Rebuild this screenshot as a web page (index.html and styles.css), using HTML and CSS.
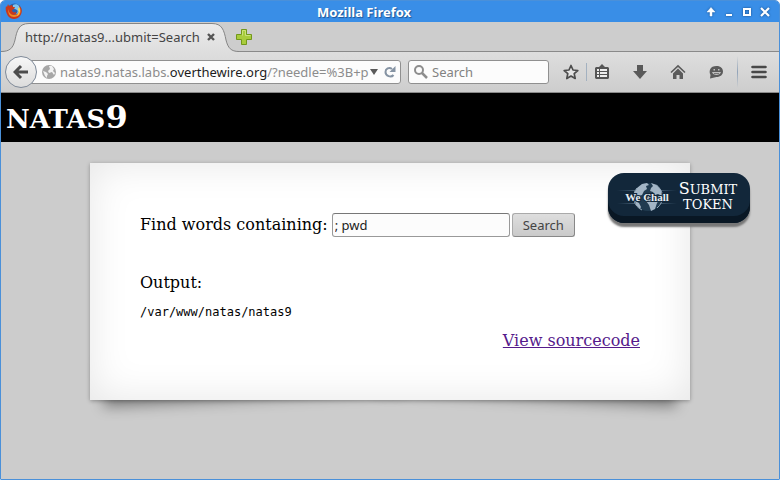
FILE: index.html
```html
<!DOCTYPE html>
<html lang="en">
<head>
<meta charset="utf-8">
<title>Mozilla Firefox</title>
<link rel="stylesheet" href="styles.css">
</head>
<body>
<div class="window">
  <header class="titlebar">
    <svg class="logo" width="18" height="18" viewBox="0 0 18 18" aria-hidden="true">
      <circle cx="9.500" cy="8.500" r="7" fill="#2a62ac"/>
      <path d="M8 3c3-2 7 0 7 4s-2 5-4 5c2-2 2-3 1-4s-3-1-4-2z" fill="#7fc4ef"/>
      <path d="M1 4l1 1 1-3 1 2 3-1 1 2 2 0-1 2-2 1c0 2 2 3 4 2 1 2-1 3-3 3 4 1 6-2 6-5 1 0 1-3 0-5 3 3 4 7 1 11-3 4-9 4-12 0C1 11 0 7 1 4z" fill="#c93a1c"/>
      <path d="M3 7c1 4 3 6 6 6 4 0 6-3 6-7 2 5-1 9-6 9-4 0-6-3-6-8z" fill="#f08a24"/>
      <path d="M14 5c2 3 1 7-2 9 2-3 2-5 1-7z" fill="#ffd84a"/>
    </svg>
    <h2 class="caption">Mozilla Firefox</h2>
    <div class="controls">
      <button aria-label="Roll up"><svg width="12" height="12" viewBox="0 0 12 12"><path d="M6 1.500L2 6h3v4h2V6h3z" fill="#fff" stroke="#fff" stroke-width=".5"/></svg></button>
      <button aria-label="Minimize"><svg width="12" height="12" viewBox="0 0 12 12"><path d="M3 8h6v2H3z" fill="#fff"/></svg></button>
      <button aria-label="Maximize"><svg width="12" height="12" viewBox="0 0 12 12"><path d="M2 2h8v8H2zM4 4v4h4V4z" fill="#fff" fill-rule="evenodd"/></svg></button>
      <button aria-label="Close"><svg width="12" height="12" viewBox="0 0 12 12"><path d="M2 2l8 8M10 2l-8 8" stroke="#fff" stroke-width="2.200"/></svg></button>
    </div>
  </header>

  <div class="tabs">
    <div class="tab">
      <svg class="tab-shape" width="238" height="30" viewBox="0 0 238 30" aria-hidden="true">
        <defs><linearGradient id="tabfill" x1="0" y1="0" x2="0" y2="1"><stop offset="0" stop-color="#ebebeb"/><stop offset="1" stop-color="#dedede"/></linearGradient></defs>
        <path d="M0 29.500C9 29.500 12 26 14 18C16 8 18 1.500 28 1.500H211C221 1.500 223 8 225 18C227 26 230 29.500 238 29.500V30H0z" fill="url(#tabfill)"/>
        <path d="M0 29.500C9 29.500 12 26 14 18C16 8 18 1.500 28 1.500H211C221 1.500 223 8 225 18C227 26 230 29.500 238 29.500" fill="none" stroke="#858585"/>
      </svg>
      <span class="tab-title">http://natas9...ubmit=Search</span>
      <button class="tab-close" aria-label="Close tab"><svg width="10" height="10" viewBox="0 0 10 10"><path d="M2 2l6 6M8 2l-6 6" stroke="#555" stroke-width="2.400"/></svg></button>
    </div>
    <button class="new-tab" aria-label="New tab"><svg width="16" height="16" viewBox="0 0 16 16"><path d="M5.500.5h5v5h5v5h-5v5h-5v-5h-5v-5h5z" fill="#a9cc3c" stroke="#72981b"/><path d="M6.500 6.500v-5h3v5h5" fill="none" stroke="#cbe27b"/></svg></button>
  </div>

  <nav class="toolbar">
    <button class="back" aria-label="Back"><svg width="16" height="16" viewBox="0 0 16 16"><path d="M8 2L2 8l6 6M3 8h12" fill="none" stroke="#4c4c4c" stroke-width="3"/></svg></button>
    <div class="urlbar">
      <svg width="14" height="14" viewBox="0 0 14 14" aria-hidden="true"><circle cx="7" cy="7" r="7" fill="#a7a7a7"/><path d="M7 1l3 0 2 3-1 2 2 2-1 2-2-3-3 1-1-2 2-2zM1 6l3 1 2 2-1 2 0 2-2-2z" fill="#f3f3f3"/></svg>
      <div class="url" role="textbox" aria-label="Address" contenteditable="true" spellcheck="false">natas9.natas.labs.<span>overthewire.org</span>/?needle=%3B+p</div>
      <button aria-label="History"><svg width="8" height="6" viewBox="0 0 8 6"><path d="M0 0h8L4 6z" fill="#5a5a5a"/></svg></button>
      <button class="reload" aria-label="Reload"><svg width="12" height="12" viewBox="0 0 12 12"><path d="M8 3C5 .5 1.500 3 1.500 6c0 4 5.500 6 8 3" fill="none" stroke="#8593a3" stroke-width="2"/><path d="M11.500 0v6H5.500z" fill="#8593a3"/></svg></button>
    </div>
    <label class="searchbar">
      <svg width="14" height="14" viewBox="0 0 14 14" aria-hidden="true"><circle cx="5" cy="5" r="4" fill="none" stroke="#8d8d8d" stroke-width="2"/><path d="M8 8l5 5" stroke="#8d8d8d" stroke-width="2.500"/></svg>
      <input type="text" placeholder="Search" aria-label="Web search">
    </label>
    <div class="tools">
      <button aria-label="Bookmark"><svg width="16" height="16" viewBox="0 0 16 16"><path d="M8 1.500l2 4.500 4.800.5-3.600 3.200 1 4.800L8 12l-4.200 2.500 1-4.800L1.200 6.500 6 6z" fill="#e3e3e3" stroke="#4d4d4d" stroke-width="1.700" stroke-linejoin="round"/></svg></button>
      <i class="rule short"></i>
      <button aria-label="Bookmarks list"><svg width="16" height="16" viewBox="0 0 16 16"><path d="M2 3h3l3-3 3 3h3l1 1v10l-1 1H2l-1-1V4z" fill="#555"/><path d="M3 5h2v2H3zM6 5h7v2H6zM3 8h2v2H3zM6 8h7v2H6zM3 11h2v2H3zM6 11h7v2H6z" fill="#eee"/></svg></button>
      <button aria-label="Downloads"><svg width="16" height="16" viewBox="0 0 16 16"><path d="M5 1h6v6h4l-7 8-7-8h4z" fill="#595959"/></svg></button>
      <button aria-label="Home"><svg width="16" height="16" viewBox="0 0 16 16"><path d="M1 8.500L8 1.800l7 6.700" fill="none" stroke="#5b5b5b" stroke-width="1.600"/><path d="M3 9.500l5-5 5 5V15H9.500v-4h-3v4H3z" fill="#5b5b5b"/></svg></button>
      <button aria-label="Chat"><svg width="16" height="16" viewBox="0 0 16 16"><path d="M8.500 2C13 2 15 4.500 15 7.500S12.500 13 8.500 13L2 14.500 2.500 11C.5 7 2 2 8.500 2z" fill="#5b5b5b"/><path d="M5.500 5h1.500v1.500H5.500zM10 5h1.500v1.500H10zM4 8h9c-1 4-8 4-9 0z" fill="#c0c0c0"/><path d="M6 9h5v1H6z" fill="#777"/></svg></button>
      <i class="rule"></i>
      <button class="menu" aria-label="Menu"><svg width="16" height="14" viewBox="0 0 16 14"><path d="M1.500 2h13M1.500 7h13M1.500 12h13" stroke="#484848" stroke-width="2.600" stroke-linecap="round"/></svg></button>
    </div>
  </nav>

  <div class="page">
    <h1 class="level">NATAS<span>9</span></h1>
    <main class="sheet">
      <form class="finder">
        <label for="needle">Find words containing:</label>
        <input id="needle" type="text" value="; pwd">
        <button type="button">Search</button>
      </form>
      <p class="output">Output:</p>
      <pre>/var/www/natas/natas9</pre>
      <p class="source"><a href="#">View sourcecode</a></p>
    </main>
    <a class="token" href="#">
      <svg width="60" height="34" viewBox="0 0 60 34" aria-hidden="true">
        <defs><linearGradient id="beam"><stop offset="0" stop-color="#53718a" stop-opacity="0"/><stop offset=".5" stop-color="#7893a8"/><stop offset="1" stop-color="#53718a" stop-opacity="0"/></linearGradient></defs>
        <path d="M0 11h60v1H0zM0 24h60v1H0z" fill="url(#beam)"/>
        <circle cx="31" cy="18" r="14" fill="#213b50"/>
        <path d="M20 9l5-4 5-1 2 2-3 1 1 3-3 2-2 4-4 1-3 3-1-6zM34 4l6 2 4 5 1 6-4-2-3 1-2-3-3-1 1-3 2-2zM31 17l6-1 6 4-3 4-2 6-4 2-2-6-3-4zM18 22l4 2 2 4-1 2-4-4z" fill="#a3b5c5"/>
        <path d="M20 9a14 14 0 0 0 5 22M39 6a14 14 0 0 1 1 23" fill="none" stroke="#90a6b7"/>
        <text x="30" y="22" text-anchor="middle">We Chall</text>
      </svg>
      <span class="token-text"><span class="initial">S</span>UBMIT<br>TOKEN</span>
    </a>
  </div>
</div>
</body>
</html>
```

FILE: styles.css
```css
* { box-sizing: border-box; }

body {
  margin: 0;
  background: #fff;
  font-family: "Noto Sans", sans-serif;
  font-size: 13px;
}

h1, h2, p, pre { margin: 0; }

button, input { font: inherit; }

svg { display: block; flex: none; }

.titlebar button, .tabs button, .toolbar button {
  display: flex;
  align-items: center;
  justify-content: center;
  padding: 0;
  border: 0;
  background: none;
}

.window {
  display: flex;
  flex-direction: column;
  min-height: 100vh;
  border: 1px solid #4a90d9;
  border-radius: 5px 5px 1px 1px;
  background: #ccc;
  overflow: hidden;
}

/* Title bar */
.titlebar {
  display: flex;
  align-items: center;
  height: 21px;
  padding: 0 8px 0 4px;
  background: #398ee7;
}

.logo { margin-top: -2px; }

.caption {
  flex: 1;
  color: #fff;
  font-size: 13px;
  line-height: 20px;
  text-align: center;
  text-shadow: 1px 1px 1px #1d5596;
}

.controls {
  display: flex;
  justify-content: flex-end;
  gap: 6px;
}

.controls svg { filter: drop-shadow(0 0 1px #174a86); }

/* Tab strip */
.tabs {
  display: flex;
  align-items: center;
  height: 30px;
  background: #cdcdcd;
  box-shadow: inset 0 -1px #8a8a8a;
}

.tab {
  position: relative;
  display: flex;
  align-items: center;
  justify-content: space-between;
  width: 238px;
  height: 30px;
  padding: 0 23px 0 24px;
  color: #444;
}

.tab-shape {
  position: absolute;
  inset: 0;
}

.tab-title { position: relative; white-space: nowrap; }

.tab-close { position: relative; }

.new-tab { margin-left: -3px; }

/* Navigation toolbar */
.toolbar {
  display: flex;
  align-items: center;
  height: 41px;
  padding-left: 4px;
  border-bottom: 1px solid #8a8a8a;
  background: linear-gradient(#dedede, #cdcdcd);
}

.toolbar .back {
  z-index: 1;
  flex: none;
  width: 32px;
  height: 32px;
  border: 1px solid #7f8a99;
  border-radius: 50%;
  background: linear-gradient(#f7f7f7, #dcdcdc);
}

.urlbar, .searchbar {
  display: flex;
  align-items: center;
  height: 24px;
  border: 1px solid #909090;
  border-radius: 3px;
  background: #fcfcfc;
}

.urlbar {
  flex: 1;
  min-width: 0;
  margin-left: -8px;
  padding: 0 4px 0 12px;
  gap: 4px;
}

.url {
  flex: 1;
  min-width: 0;
  color: #8c8c8c;
  white-space: nowrap;
}

.toolbar .reload { margin-left: 2px; }

.url span { color: #1c1c1c; }

.searchbar {
  width: 141px;
  margin: 0 7px;
  padding: 0 5px;
  gap: 4px;
}

.searchbar input {
  flex: 1;
  min-width: 0;
  padding: 0;
  border: 0;
  outline: 0;
  background: none;
}

.searchbar input::placeholder { color: #828282; }

.tools { display: flex; align-items: center; gap: 8px; }

.toolbar .tools button { width: 30px; height: 30px; }

.toolbar .tools .menu { width: 41px; margin-left: -8px; }

.rule {
  width: 1px;
  height: 32px;
  margin-left: -2px;
  background: linear-gradient(#9cabbc00, #91a3b8, #9cabbc00);
}

.rule.short {
  height: 18px;
  margin: 0 -8px;
  background: #a3b1c0;
}

/* Web page */
.page {
  position: relative;
  z-index: 0;
  flex: 1;
  color: #000;
  font-family: "DejaVu Serif", serif;
  font-size: 16px;
  line-height: 19px;
}

.level {
  display: flex;
  align-items: baseline;
  height: 49px;
  padding: 6px 5px;
  background: #000;
  color: #fff;
  font-size: 26px;
  line-height: 37px;
}

.level span { font-size: 32px; }

.sheet {
  position: relative;
  max-width: 600px;
  margin: 21px auto;
  padding: 50px;
  background: #fff;
  box-shadow: 0 1px 4px rgba(0, 0, 0, .3), inset 0 0 40px rgba(0, 0, 0, .1);
}

/* Lifted-corner shadows under the sheet */
.sheet::before, .sheet::after {
  content: "";
  position: absolute;
  z-index: -1;
  bottom: 16px;
  left: 12px;
  width: 50%;
  height: 20%;
  box-shadow: 0 15px 14px rgba(0, 0, 0, .4);
  transform: rotate(-3deg);
}

.sheet::after {
  right: 12px;
  left: auto;
  transform: rotate(3deg);
}

.finder {
  display: flex;
  align-items: center;
  height: 24px;
  margin-bottom: 36px;
}

.finder label { margin-bottom: 2px; }

.finder input, .finder button {
  height: 24px;
  border: 1px solid #999;
  border-radius: 3px;
  font-family: "Noto Sans", sans-serif;
  font-size: 13px;
}

.finder input {
  width: 178px;
  margin: 0 2px 0 4px;
  padding: 0 2px;
  border-top-color: #777;
  background: #fcfcfc;
  color: #222;
}

.finder button {
  padding: 0 10px;
  border-color: #aaa #888 #888 #aaa;
  background: linear-gradient(#dedede, #cacaca);
  color: #444;
}

pre {
  margin: 13px 0 12px;
  font-family: "DejaVu Sans Mono", monospace;
  font-size: 12px;
  line-height: 14px;
}

.source { text-align: right; }

.source a { color: #551a8b; }

/* Token badge floating over the page */
.token {
  position: absolute;
  top: 80px;
  right: 29px;
  display: flex;
  align-items: center;
  width: 142px;
  height: 50px;
  padding: 0 11px 4px 9px;
  border-radius: 16px;
  background: #12273a;
  box-shadow: inset 0 -7px #091724, 0 4px 2px #777;
  color: #fff;
  text-decoration: none;
}

.token text {
  fill: #e7eef4;
  stroke: #12273a;
  stroke-width: 2px;
  paint-order: stroke;
  font: bold 11px "Liberation Serif", serif;
}

.token-text {
  flex: 1;
  font-size: 13px;
  line-height: 15px;
  text-align: center;
}

.initial { font-size: 16px; }
```
